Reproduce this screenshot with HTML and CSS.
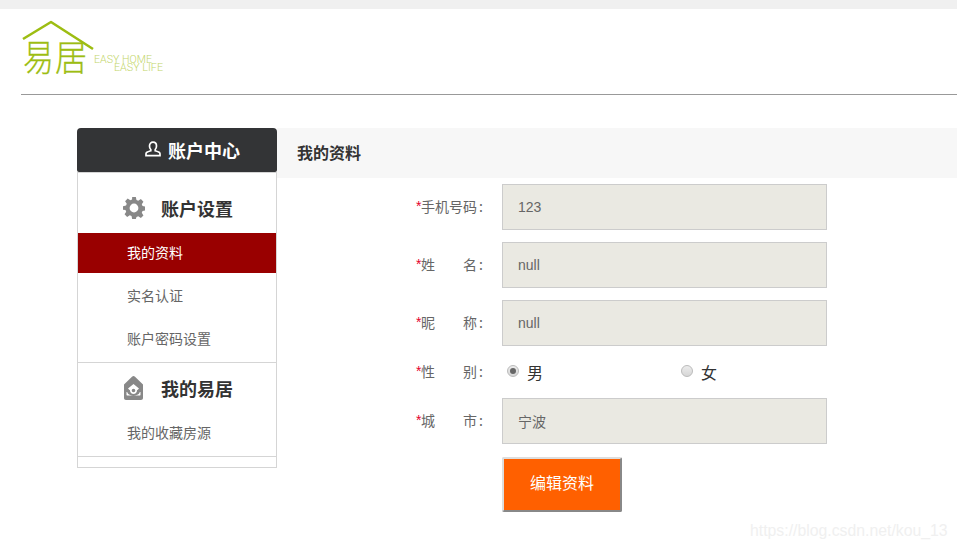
FILE: index.html
```html
<!DOCTYPE html>
<html lang="zh">
<head>
<meta charset="utf-8">
<title>我的资料</title>
<link rel="stylesheet" href="styles.css">
</head>
<body>
<div class="topbar"></div>
<header class="header">
  <svg class="logo" width="150" height="60" viewBox="0 0 150 60" role="img" aria-label="易居">
    <polyline class="roof" points="2,18 30,1 72,28"/>
    <text class="logo-cn" x="2" y="50" textLength="31" lengthAdjust="spacingAndGlyphs">易</text>
    <text class="logo-cn" x="34" y="50" textLength="32" lengthAdjust="spacingAndGlyphs">居</text>
    <text class="logo-en" x="73" y="41.500" textLength="58" lengthAdjust="spacingAndGlyphs">EASY HOME</text>
    <text class="logo-en" x="93" y="50" textLength="49" lengthAdjust="spacingAndGlyphs">EASY LIFE</text>
  </svg>
</header>
<div class="rule"></div>
<main class="main">
  <aside class="sidebar">
    <div class="side-head">
      <svg class="user-icon" width="16" height="16" viewBox="0 0 16 16"><path d="M4.500 5c0-2.200 1.400-3.800 3.500-3.800S11.500 2.800 11.500 5c0 1.500-.5 2.700-1.300 3.500v1.300c1.500.5 3 1 3.900 1.500.6.400.9.800.9 1.400v2H1v-2c0-.6.300-1 .9-1.400.9-.5 2.400-1 3.900-1.500V8.500C5 7.700 4.500 6.500 4.500 5z"/></svg>
      <span>账户中心</span>
    </div>
    <nav class="side-panel">
      <div class="side-title side-title-first">
        <svg class="side-icon" width="22" height="22" viewBox="0 0 24 24"><path fill-rule="evenodd" d="M10 0h4l.7 3.300 1.900.8L19.500 2.300l2.800 2.800-1.800 2.900.8 1.900 3.300.7v4l-3.300.7-.8 1.900 1.800 2.900-2.800 2.800-2.900-1.800-1.900.8L14 24h-4l-.7-3.300-1.900-.8-2.900 1.800-2.800-2.800 1.800-2.900-.8-1.900L0 14v-4l3.300-.7.8-1.900-1.800-2.900 2.800-2.800 2.900 1.800 1.900-.8zM12 7.200a4.800 4.800 0 1 0 0 9.600 4.800 4.800 0 0 0 0-9.600z"/></svg>
        <span>账户设置</span>
      </div>
      <a class="side-item active">我的资料</a>
      <a class="side-item">实名认证</a>
      <a class="side-item side-item-gap">账户密码设置</a>
      <div class="side-title side-title-second">
        <svg class="side-icon home-icon" width="19" height="24" viewBox="0 0 19 24"><path fill-rule="evenodd" d="M9.500 0c.5 0 1 .3 1.500.8L19 8.500V22c0 1.200-.8 2-2 2H2c-1.200 0-2-.8-2-2V8.500L8 .8C8.500.3 9 0 9.500 0zM9.500 8L4 12.500l1.500 1.500c.3 0 .5.100.5.500 0 1.900 1.500 3.500 3.500 3.500S13 16.400 13 14.500c0-.4.200-.5.500-.5l1.500-1.500zM9.500 12.700a1.800 1.800 0 1 1 0 3.600 1.800 1.800 0 0 1 0-3.600zM2.500 16v2.800c0 .6.300.7.800.7h12.400c.5 0 .8-.1.800-.7V16h-.8v.5c-1 2.300-3.300 3-6.200 3s-5.200-.7-6.200-3V16z"/></svg>
        <span>我的易居</span>
      </div>
      <a class="side-item side-item-last">我的收藏房源</a>
      <div class="side-foot"></div>
    </nav>
  </aside>
  <section class="content">
    <h1 class="content-title">我的资料</h1>
    <form class="form">
      <div class="row">
        <label class="label"><i>*</i><span class="label-text">手机号码</span><b>:</b></label>
        <input class="field field-num" type="text" value="123">
      </div>
      <div class="row">
        <label class="label"><i>*</i><span class="label-text">姓名</span><b>:</b></label>
        <input class="field" type="text" value="null">
      </div>
      <div class="row">
        <label class="label"><i>*</i><span class="label-text">昵称</span><b>:</b></label>
        <input class="field" type="text" value="null">
      </div>
      <div class="row row-radio">
        <label class="label"><i>*</i><span class="label-text">性别</span><b>:</b></label>
        <div class="radios">
          <label class="radio"><input type="radio" name="sex" checked><span>男</span></label>
          <label class="radio"><input type="radio" name="sex"><span>女</span></label>
        </div>
      </div>
      <div class="row">
        <label class="label"><i>*</i><span class="label-text">城市</span><b>:</b></label>
        <input class="field" type="text" value="宁波">
      </div>
      <div class="row row-btn">
        <button class="btn" type="button">编辑资料</button>
      </div>
    </form>
  </section>
</main>
<div class="watermark">https://blog.csdn.net/kou_13</div>
</body>
</html>
```

FILE: styles.css
```css
* { box-sizing: border-box; }
html, body { margin: 0; padding: 0; height: 100%; overflow: hidden; background: #fff; }
body { font-family: "Liberation Sans", "Noto Sans CJK SC", sans-serif; color: #666; position: relative; }

.topbar { height: 9px; background: #f0f0f0; }
.header { height: 85px; padding: 12px 0 0 21px; }
.logo { display: block; overflow: visible; }
.roof { fill: none; stroke: #9dbd12; stroke-width: 2.600; stroke-linejoin: round; }
.logo-cn { font-family: "Noto Sans CJK SC", sans-serif; font-size: 36px; font-weight: 300; fill: #9dbd12; stroke: #9dbd12; stroke-width: .3px; }
.logo-en { font-family: "Roboto", sans-serif; font-size: 10.500px; font-weight: 300; fill: #c3d66b; }
.rule { height: 1px; margin-left: 21px; background: #999; }

.main { display: flex; margin-top: 33px; padding-left: 77px; }
.sidebar { width: 200px; flex: none; }
.side-head {
  height: 44px; display: flex; align-items: center; padding-left: 68px; gap: 7px;
  background: #333436; color: #fff; border-radius: 4px 4px 2px 2px;
  font-size: 18px; font-weight: 700; font-family: "Noto Sans CJK SC", sans-serif;
}
.user-icon { fill: none; stroke: #fff; stroke-width: 1.700; margin-top: -2px; }
.side-panel { height: 296px; border: 1px solid #d5d5d5; }
.side-title {
  display: flex; align-items: center; padding-left: 45px;
  font-family: "Noto Sans CJK SC", sans-serif; font-size: 18px; font-weight: 700; color: #333;
}
.side-title-first { height: 60px; gap: 16px; padding-top: 10px; }
.side-title-second { height: 53px; border-top: 1px solid #d5d5d5; padding-left: 46px; gap: 18px; padding-bottom: 2px; }
.side-icon { fill: #888; flex: none; }
.side-item {
  display: flex; align-items: center; height: 43px; padding-left: 49px;
  font-family: "Noto Sans CJK SC", sans-serif; font-size: 14px; color: #666;
}
.side-item.active { height: 40px; padding-bottom: 2px; background: #990000; color: #fff; }
.side-item-gap { height: 46px; padding-bottom: 3px; }
.side-item-last { height: 41px; padding-bottom: 8px; }
.side-foot { border-top: 1px solid #d5d5d5; height: 11px; }

.content { flex: 1; min-width: 0; }
.content-title {
  margin: 0; height: 50px; line-height: 49px; padding-left: 20px; background: #f7f7f7;
  font-family: "Noto Sans CJK SC", sans-serif; font-size: 16px; font-weight: 700; color: #333;
}
.form { padding: 6px 0 0 139px; display: flex; flex-direction: column; gap: 12px; }
.row { display: flex; align-items: center; height: 46px; }
.row-radio { height: 28px; }
.row-btn { height: 55px; margin-top: 1px; padding-left: 86px; align-items: flex-start; }
.label {
  width: 86px; flex: none; display: flex; align-items: center; height: 20px; margin-top: -2px;
  font-size: 14px; color: #666;
  font-family: "Noto Sans CJK SC", sans-serif;
}
.label i { font-style: normal; color: #e4002b; width: 5px; font-family: "Liberation Sans", sans-serif; }
.label-text { display: block; width: 56px; text-align-last: justify; margin-right: 1px; }
.label b { font-weight: 400; margin-left: 1px; }
.field {
  width: 325px; height: 46px; padding: 0 15px; border: 1px solid #ccc; background: #eae9e2;
  font-family: "Liberation Sans", "Noto Sans CJK SC", sans-serif; font-size: 14px; color: #666; outline: none;
}
.radios { display: flex; padding-left: 5px; }
.radio {
  width: 174px; display: flex; align-items: center; gap: 8px;
  font-family: "Noto Sans CJK SC", sans-serif; font-size: 16px; color: #333;
}
.radio input {
  appearance: none; margin: -2px 0 0; width: 12px; height: 12px; border-radius: 50%; flex: none;
  border: 1px solid #bbb; background: linear-gradient(#ececec, #d6d6d6);
  display: grid; place-items: center;
}
.radio input:checked::after { content: ""; width: 6px; height: 6px; border-radius: 50%; background: #666; }
.btn {
  width: 120px; height: 55px; padding: 0 0 5px; background: #ff6000; color: #fff;
  border-style: solid; border-width: 2px; border-color: #ddd #888 #888 #ddd; border-radius: 2px;
  font-family: "Noto Sans CJK SC", sans-serif; font-size: 16px;
}
.watermark {
  position: absolute; left: 750px; top: 522px; font-size: 15.800px; line-height: 18px; color: #f0f0f0; white-space: nowrap;
}
```
